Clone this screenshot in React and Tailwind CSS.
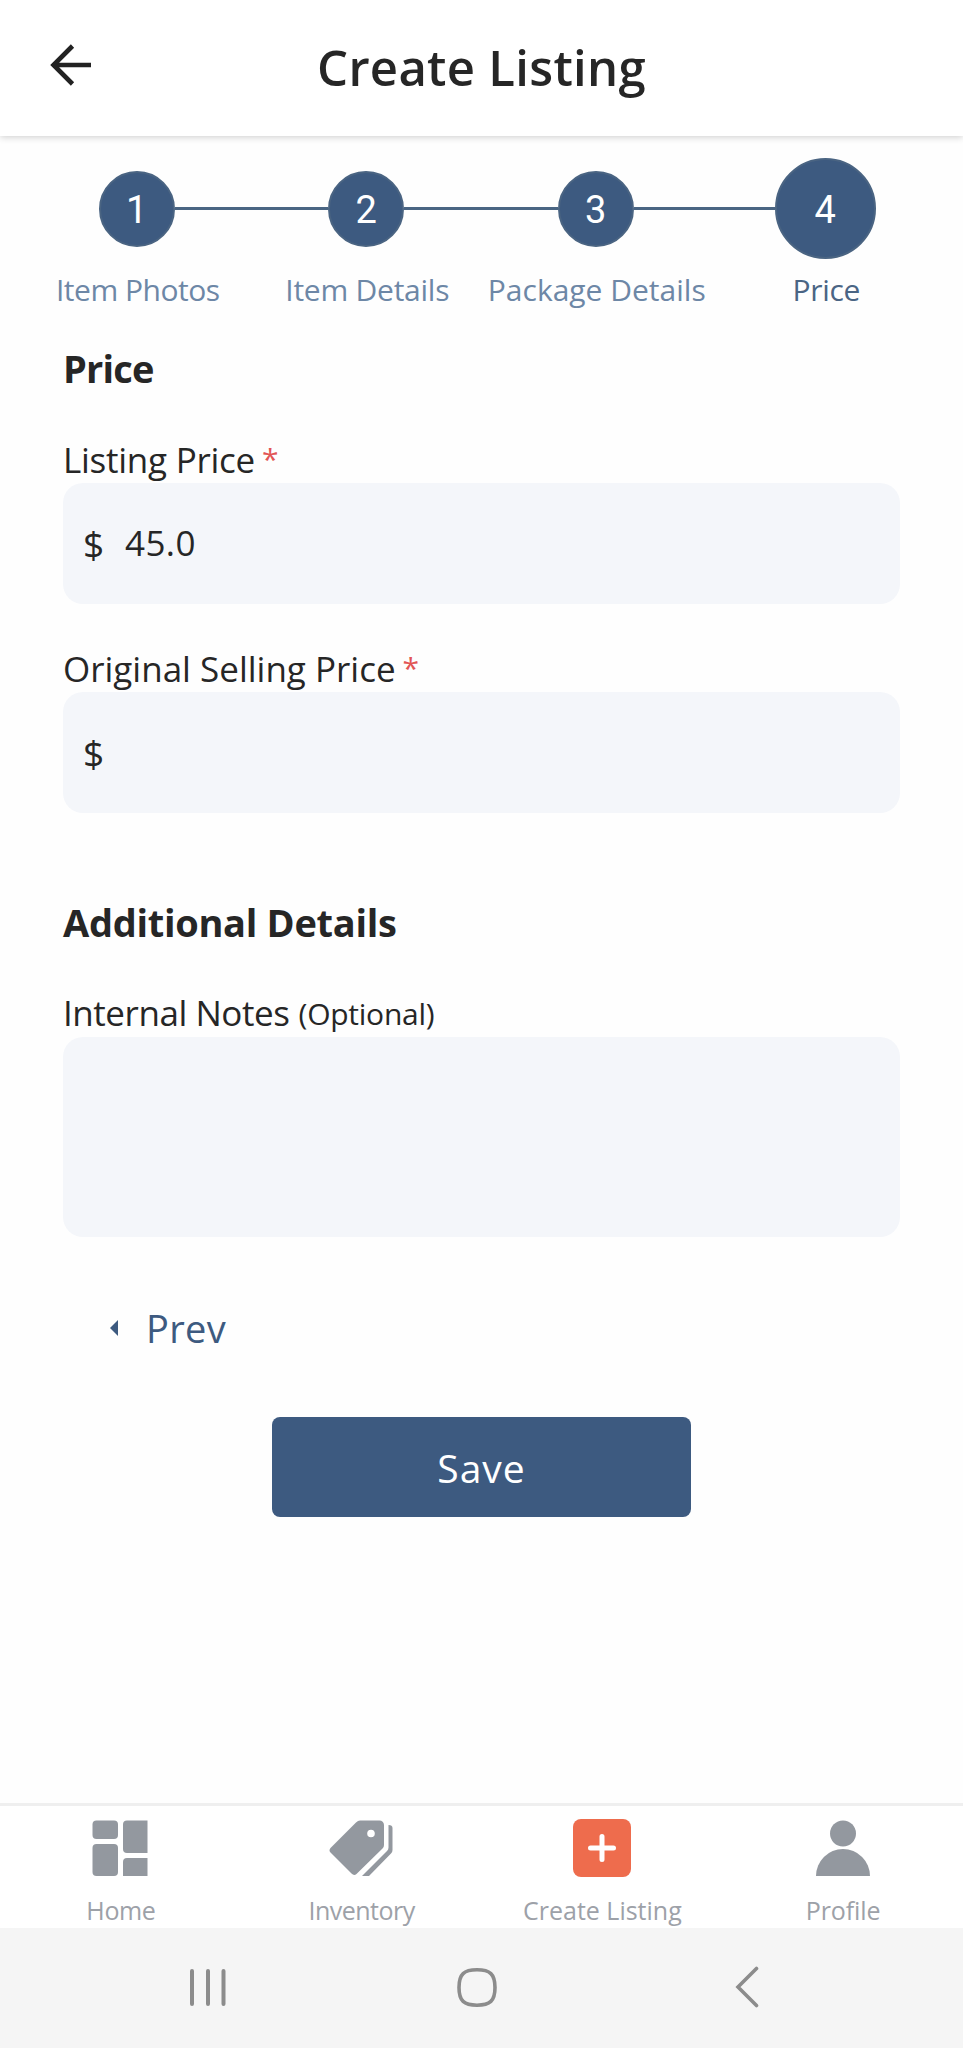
import React from 'react'

const steps = [
    { label: 'Item Photos', tracking: 'tracking-[-0.5px]' },
    { label: 'Item Details', tracking: 'tracking-[-0.25px]' },
    { label: 'Package Details', tracking: 'tracking-[0px]' },
    { label: 'Price', tracking: 'tracking-[-0.3px]' },
]

const HomeIcon = () => (
    <svg width="56" height="56" viewBox="0 0 56 56" fill="#93989f">
        <rect x="0.500" y="0.500" width="25.500" height="18.500" rx="4" />
        <rect x="0.500" y="24" width="25.500" height="32" rx="4" />
        <path d="M35 0.500H55.500V33H35A4 4 0 0 1 31 29V4.500A4 4 0 0 1 35 0.500Z" />
        <path d="M35 38H55.500V56H31V42A4 4 0 0 1 35 38Z" />
    </svg>
)

const TagIcon = () => (
    <svg width="64" height="56" viewBox="0 0 64 56" fill="#93989f">
        <path fillRule="evenodd" d="M31 0.500H50.500A4.500 4.500 0 0 1 55 5V25Q55 27 53.500 28.500L27.500 54Q25 56 22.500 53.500L1.500 32.500Q-0.500 30.500 1.500 28L27 2.500Q29 0.500 31 0.500ZM42 9.700A3.800 3.800 0 1 0 42 17.300A3.800 3.800 0 1 0 42 9.700Z" />
        <path d="M59.500 5Q63.500 5 63.500 8V30Q63.500 32 62 33.500L40 56H33L58 31Q59.500 29.500 59.500 27.500Z" />
    </svg>
)

const PlusIcon = () => (
    <svg width="58" height="58" viewBox="0 0 58 58">
        <rect width="58" height="58" rx="8" fill="#ee6c4d" />
        <path d="M29 17.500V40.500M17.500 29H40.500" stroke="#fff" strokeWidth="5" strokeLinecap="round" />
    </svg>
)

const ProfileIcon = () => (
    <svg width="54" height="56" viewBox="0 0 54 56" fill="#93989f">
        <circle cx="27" cy="13.500" r="13" />
        <path d="M0 56A27 27 0 0 1 54 56Z" />
    </svg>
)

const tabs = [
    { label: 'Home', icon: HomeIcon, tracking: 'tracking-[-0.4px]' },
    { label: 'Inventory', icon: TagIcon, tracking: 'tracking-[-0.5px]' },
    { label: 'Create Listing', icon: PlusIcon, tracking: 'tracking-[0px]' },
    { label: 'Profile', icon: ProfileIcon, tracking: 'tracking-[-0.1px]' },
]

const Header = () => (
    <header className="relative h-[136px] shrink-0 flex items-center px-[50px] bg-white shadow-[0_1px_7px_rgba(0,0,0,0.2)]">
        <svg className="-mt-[6px]" width="42" height="42" viewBox="0 0 42 42" fill="none" stroke="#222" strokeWidth="4.600">
            <path d="M41 21H4M22.500 2L3.500 21L22.500 40" />
        </svg>
        <h1 className="-mt-[2px] flex-1 text-center pr-[42px] text-[49px] leading-[60px] font-semibold tracking-[0.3px]">Create Listing</h1>
    </header>
)

const Stepper = () => (
    <div className="flex pl-[22px] pt-[22px]">
        {steps.map((step, i) => {
            const current = i === steps.length - 1
            return (
                <div key={step.label} className="w-[229.500px] flex flex-col items-center">
                    <div className="w-full h-[101px] flex items-center">
                        <div className={i === 0 ? 'flex-1' : 'flex-1 h-[3px] bg-[#4a6583]'} />
                        <div className={`flex items-center justify-center rounded-full border-2 border-[#4a6482] bg-[#3d5a80] text-white text-[38px] pt-[3px] font-[Roboto] font-normal ${current ? 'size-[101px]' : 'size-[76px]'}`}>
                            {i + 1}
                        </div>
                        <div className={current ? 'flex-1' : 'flex-1 h-[3px] bg-[#4a6583]'} />
                    </div>
                    <span className={`mt-[11px] ml-[2px] text-[30px] leading-[40px] whitespace-nowrap ${step.tracking} ${current ? 'text-[#4a6584]' : 'text-[#6d87a6]'}`}>
                        {step.label}
                    </span>
                </div>
            )
        })}
    </div>
)

const Label = ({ children, required }) => (
    <div className="h-[49px] pt-[2px] text-[35px] leading-[48px] whitespace-nowrap">
        {children}
        {required && <span className="relative -top-[3px] ml-[7px] text-[30px] text-[#e25555]">*</span>}
    </div>
)

const PriceInput = ({ value }) => (
    <div className="h-[121px] rounded-[20px] bg-[#f4f6fa] flex items-center pl-[20px] text-[35px]">
        <span className="w-[42px] text-[37px]">$</span>
        <span className="tracking-[0.4px]">{value}</span>
    </div>
)

const App = () => {
    return (
        <div className="w-[963px] h-[2048px] flex flex-col bg-[#fefefe] text-[#262626] font-['Open_Sans',sans-serif] overflow-hidden">
            <Header />
            <Stepper />
            <main className="flex-1 flex flex-col px-[63px]">
                <h2 className="mt-[32px] text-[38px] leading-[52px] font-bold tracking-[-0.8px]">Price</h2>
                <div className="mt-[40px]">
                    <Label required><span className="tracking-[-0.25px]">Listing Price</span></Label>
                    <PriceInput value="45.0" />
                </div>
                <div className="mt-[39px]">
                    <Label required>Original Selling Price</Label>
                    <PriceInput value="" />
                </div>

                <h2 className="mt-[83px] text-[38px] leading-[52px] font-bold tracking-[-0.3px]">Additional Details</h2>
                <div className="mt-[39px]">
                    <Label>
                        <span className="tracking-[-0.45px]">Internal Notes</span> <span className="text-[30px] tracking-[-0.25px] relative -top-px">(Optional)</span>
                    </Label>
                    <div className="mt-px h-[200px] rounded-[20px] bg-[#f4f6fa]" />
                </div>

                <button className="mt-[66px] ml-[47px] self-start flex items-center text-[38px] leading-[50px] tracking-[0.3px] text-[#3d5a80]">
                    <svg className="mr-[28px]" width="8" height="16" viewBox="0 0 8 16" fill="currentColor">
                        <path d="M8 0V16L0 8Z" />
                    </svg>
                    Prev
                </button>
                <button className="mt-[64px] h-[100px] w-[419px] self-center rounded-[8px] bg-[#3d5a80] pt-[2px] text-[39px] tracking-[1px] text-white">Save</button>
            </main>

            <nav className="h-[125px] shrink-0 flex border-t-3 border-[#efefef] bg-white">
                {tabs.map(({ label, icon: Icon, tracking }) => (
                    <div key={label} className="flex-1 flex flex-col items-center">
                        <div className="mt-[12px] h-[60px] flex items-center">
                            <Icon />
                        </div>
                        <span className={`mt-[15px] ml-px text-[25px] leading-[34px] text-[#9da1a8] whitespace-nowrap ${tracking}`}>{label}</span>
                    </div>
                ))}
            </nav>

            <div className="h-[120px] shrink-0 flex items-center pl-[189px] bg-[#f5f5f5]">
                <svg width="38" height="40" viewBox="0 0 38 40" stroke="#8c8c8c" strokeWidth="4" strokeLinecap="round">
                    <path d="M3 3V36M19 3V36M34.500 3V36" />
                </svg>
                <svg className="ml-[230px]" width="40" height="40" viewBox="0 0 40 40" fill="none" stroke="#8c8c8c" strokeWidth="3.600">
                    <path d="M20 1.800C33 1.800 38 6 38 19.500S33 37.200 20 37.200S2 33 2 19.500S7 1.800 20 1.800Z" />
                </svg>
                <svg className="ml-[238px] -mt-[2px]" width="24" height="42" viewBox="0 0 24 42" fill="none" stroke="#8c8c8c" strokeWidth="3.600" strokeLinecap="round">
                    <path d="M21.500 2.500L3 21L21.500 39.500" />
                </svg>
            </div>
        </div>
    )
}

export default App
